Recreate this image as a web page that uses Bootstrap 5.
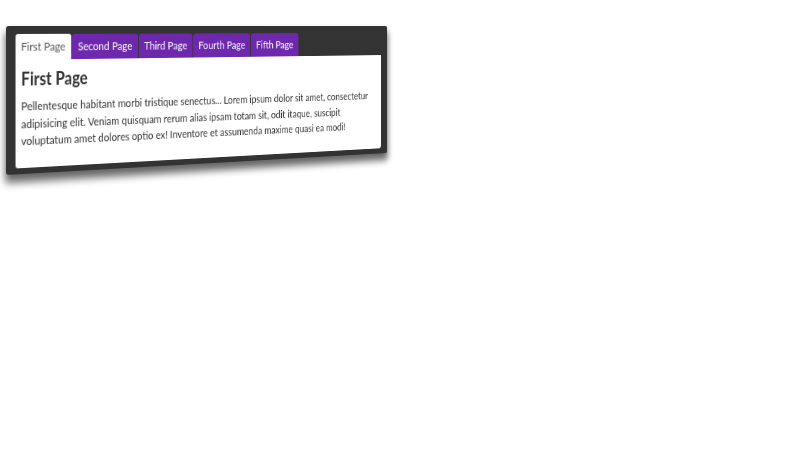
<!DOCTYPE html>
<html lang="en">
<head>
<meta charset="utf-8">
<title>Tabs</title>
<link rel="stylesheet" href="https://cdn.jsdelivr.net/npm/bootstrap@5.3.0/dist/css/bootstrap.min.css">
<style>
html,body{height:100%}
body{background:#fff;font-family:"Lato","Liberation Sans",sans-serif;padding-top:26px;padding-left:6px;height:450px}
.tilt-frame{width:514px;height:149px;padding:8px 10px 6.5px 10.5px;background:#333;border-radius:3px;
 box-shadow:0 7px 9px 1px rgba(0,0,0,.6);transform-origin:0 0;transform:matrix3d(.87,0,0,.000337,0,1,0,0,0,0,1,0,0,0,0,1);display:flex;flex-direction:column}
.tilt-frame .nav-tabs{border:0;gap:1px;flex-wrap:nowrap}
.tilt-frame .nav-link{background:#6d28ad;color:#fff;border:0;border-radius:3px 3px 0 0;margin:0;padding:0 7px;height:26px;line-height:25px;font-size:12.1px;white-space:nowrap}
.tilt-frame .nav-link.active{background:#fff;color:#555}
.tilt-pane{flex:1;background:#fff;border-radius:0 0 3px 3px;padding:7px 7px;color:#333}
.tilt-pane h2{font-size:18px;font-weight:700;margin:0 0 7px;color:#333;line-height:24px}
.tilt-pane p{font-size:12px;line-height:17.5px;margin:0;white-space:nowrap}
</style>
</head>
<body>
<div class="tilt-frame">
 <ul class="nav nav-tabs">
  <li class="nav-item"><a class="nav-link active" href="#">First Page</a></li>
  <li class="nav-item"><a class="nav-link" href="#">Second Page</a></li>
  <li class="nav-item"><a class="nav-link" href="#">Third Page</a></li>
  <li class="nav-item"><a class="nav-link" href="#">Fourth Page</a></li>
  <li class="nav-item"><a class="nav-link" href="#">Fifth Page</a></li>
 </ul>
 <div class="tilt-pane">
  <h2>First Page</h2>
  <p>Pellentesque habitant morbi tristique senectus... Lorem ipsum dolor sit amet, consectetur<br>adipisicing elit. Veniam quisquam rerum alias ipsam totam sit, odit itaque, suscipit<br>voluptatum amet dolores optio ex! Inventore et assumenda maxime quasi ea modi!</p>
 </div>
</div>
<script src="https://cdn.jsdelivr.net/npm/bootstrap@5.3.0/dist/js/bootstrap.bundle.min.js"></script>
</body>
</html>
